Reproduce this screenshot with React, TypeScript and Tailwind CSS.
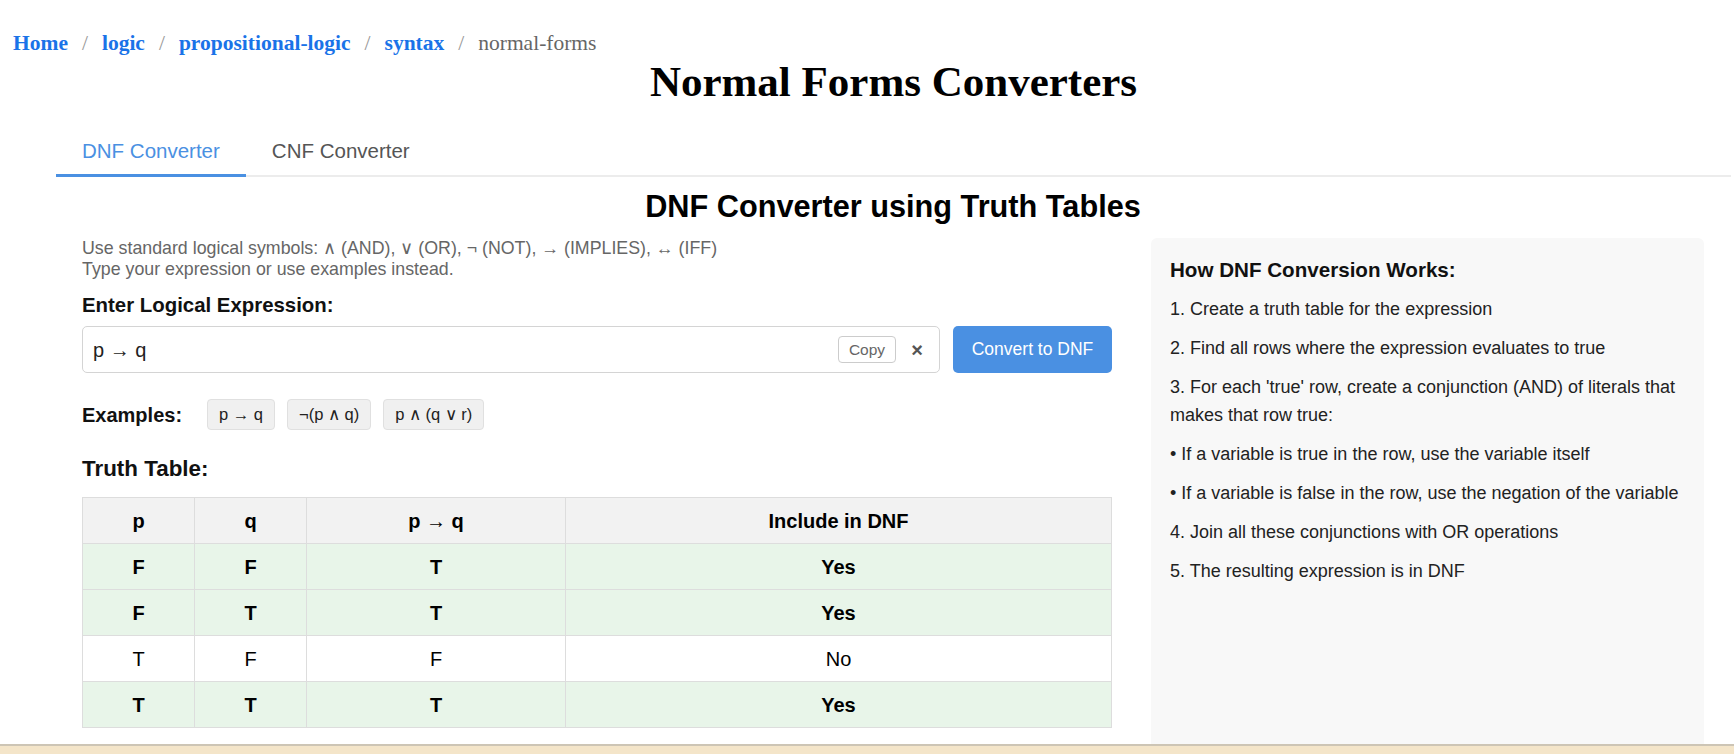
import React from "react";

const sans = { fontFamily: '"Liberation Sans", Arial, sans-serif' };
const serif = { fontFamily: '"Liberation Serif", "Times New Roman", serif' };

const crumbs = ["Home", "logic", "propositional-logic", "syntax"];

const rows = [
  { p: "F", q: "F", v: "T", inc: true },
  { p: "F", q: "T", v: "T", inc: true },
  { p: "T", q: "F", v: "F", inc: false },
  { p: "T", q: "T", v: "T", inc: true },
];

const steps = [
  "1. Create a truth table for the expression",
  "2. Find all rows where the expression evaluates to true",
  "3. For each 'true' row, create a conjunction (AND) of literals that makes that row true:",
  "• If a variable is true in the row, use the variable itself",
  "• If a variable is false in the row, use the negation of the variable",
  "4. Join all these conjunctions with OR operations",
  "5. The resulting expression is in DNF",
];

const examples = ["p → q", "¬(p ∧ q)", "p ∧ (q ∨ r)"];

export default function App() {
  return (
    <div className="relative h-screen overflow-hidden bg-white text-black" style={sans}>
      {/* Breadcrumb */}
      <nav className="flex items-center pl-[13px] pt-[31px] text-[21.5px] leading-[24px]" style={serif}>
        {crumbs.map((c) => (
          <React.Fragment key={c}>
            <a className="font-bold text-[#1a73e8]">{c}</a>
            <span className="mx-[14px] text-[#999]">/</span>
          </React.Fragment>
        ))}
        <span className="text-[#666]">normal-forms</span>
      </nav>

      <div className="ml-[56px] w-[1675px]">
        <h1 className="mt-[3px] text-center text-[43px] font-bold leading-[48px]" style={serif}>
          Normal Forms Converters
        </h1>

        {/* Tabs */}
        <div className="mt-[20px] flex border-b-2 border-[#ececec]">
          <button className="-mb-[2px] border-b-[3px] border-[#4a90e2] px-[26px] pt-[13px] pb-[11px] text-[20.5px] leading-[24px] text-[#4a90e2]">
            DNF Converter
          </button>
          <button className="-mb-[2px] border-b-[3px] border-transparent px-[26px] pt-[13px] pb-[11px] text-[20.5px] leading-[24px] text-[#555]">
            CNF Converter
          </button>
        </div>

        <div className="pl-[26px] pr-[27px]">
          <h2 className="mt-[12px] text-center text-[30.7px] font-bold leading-[36px]">
            DNF Converter using Truth Tables
          </h2>

          <div className="mt-[13px] flex gap-[39px]">
            {/* Left column */}
            <div className="w-[1030px]">
              <p className="text-[17.8px] leading-[21px] text-[#666]">
                Use standard logical symbols: ∧ (AND), ∨ (OR), ¬ (NOT), → (IMPLIES), ↔ (IFF)
                <br />
                Type your expression or use examples instead.
              </p>

              <div className="mt-[13px] text-[20.4px] font-bold leading-[24px] text-[#111]">
                Enter Logical Expression:
              </div>

              <div className="mt-[9px] flex h-[47px] gap-[13px]">
                <div className="flex flex-1 items-center rounded-[5px] border border-[#d4d4d4] pl-[10px] pr-[15px]">
                  <span className="flex-1 text-[20px] text-[#222]">p → q</span>
                  <span className="flex h-[27px] w-[58px] items-center justify-center rounded-[4px] border border-[#ccc] text-[15.5px] text-[#666]">
                    Copy
                  </span>
                  <span className="ml-[14px] w-[14px] text-center text-[20px] font-bold leading-none text-[#555]">×</span>
                </div>
                <button className="w-[159px] rounded-[5px] bg-[#4a90e2] text-[17.5px] text-white">
                  Convert to DNF
                </button>
              </div>

              <div className="mt-[26px] flex items-center">
                <span className="w-[125px] text-[20px] font-bold text-[#111]">Examples:</span>
                <div className="flex gap-[12px]">
                  {examples.map((e) => (
                    <span
                      key={e}
                      className="flex h-[31px] items-center rounded-[4px] border border-[#e0e0e0] bg-[#f0f0f0] px-[11px] text-[16.5px] text-[#222]"
                    >
                      {e}
                    </span>
                  ))}
                </div>
              </div>

              <div className="mt-[26px] text-[22.4px] font-bold leading-[26px] text-[#111]">Truth Table:</div>

              <table className="mt-[15px] w-full border-collapse text-[20px]">
                <thead>
                  <tr className="h-[46px] bg-[#f2f2f2]">
                    <th className="w-[112px] border border-[#ddd] font-bold">p</th>
                    <th className="w-[112px] border border-[#ddd] font-bold">q</th>
                    <th className="w-[259px] border border-[#ddd] font-bold">p → q</th>
                    <th className="border border-[#ddd] font-bold">Include in DNF</th>
                  </tr>
                </thead>
                <tbody>
                  {rows.map((r, i) => (
                    <tr key={i} className={r.inc ? "h-[46px] bg-[#e8f5e9] font-bold" : "h-[46px] bg-white"}>
                      <td className="border border-[#ddd] text-center">{r.p}</td>
                      <td className="border border-[#ddd] text-center">{r.q}</td>
                      <td className="border border-[#ddd] text-center">{r.v}</td>
                      <td className="border border-[#ddd] text-center">{r.inc ? "Yes" : "No"}</td>
                    </tr>
                  ))}
                </tbody>
              </table>
            </div>

            {/* Right panel */}
            <div className="min-h-[560px] w-[553px] rounded-[6px] bg-[#f8f8f8] px-[19px] pt-[20px]">
              <h3 className="text-[20.6px] font-bold leading-[24px] text-[#111]">How DNF Conversion Works:</h3>
              <div className="mt-[13px]">
                {steps.map((s) => (
                  <p key={s} className="mb-[10px] text-[18px] leading-[1.6] text-[#222]">
                    {s}
                  </p>
                ))}
              </div>
            </div>
          </div>
        </div>
      </div>

      {/* bottom strip */}
      <div className="fixed bottom-0 left-0 right-0 h-[10px] border-t-2 border-[#cdc5b5] bg-[#f4e5c9]" />
    </div>
  );
}
